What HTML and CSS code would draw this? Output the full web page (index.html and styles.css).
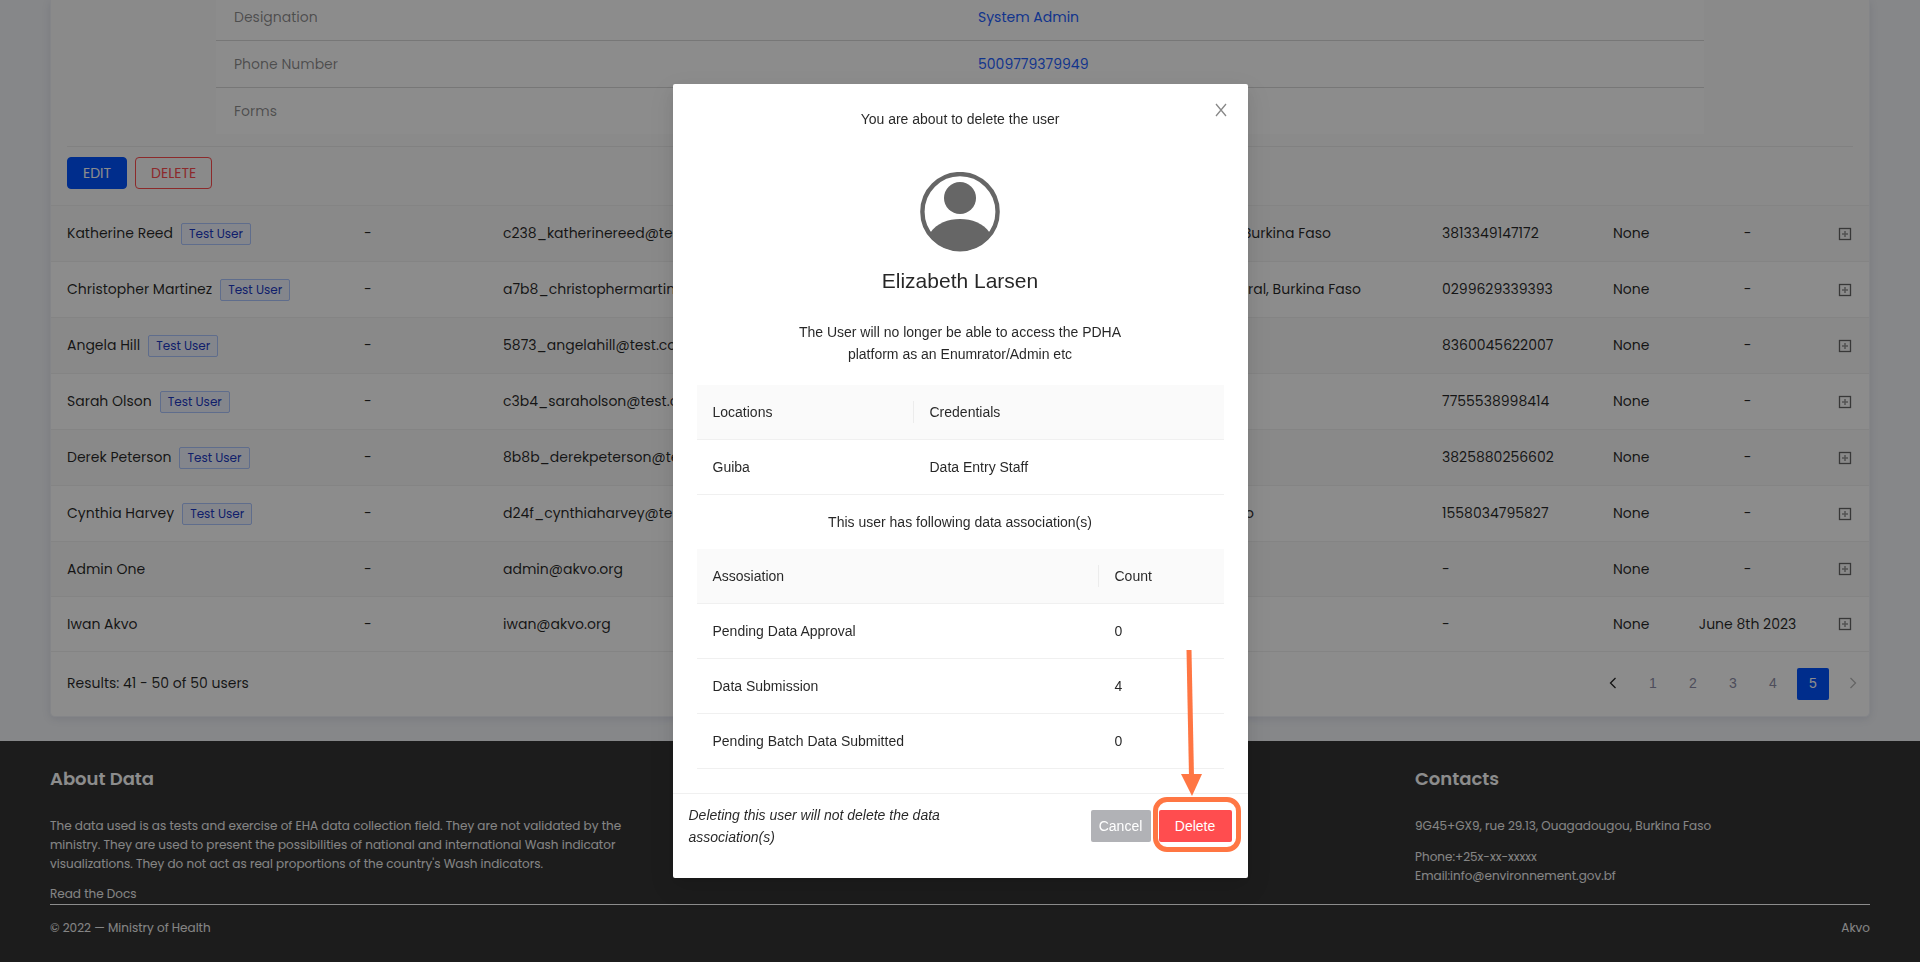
FILE: index.html
```html
<!DOCTYPE html>
<html lang="en">
<head>
<meta charset="utf-8">
<title>Manage Users</title>
<link rel="stylesheet" href="styles.css">
</head>
<body>
<svg class="sprite" aria-hidden="true">
  <symbol id="expand" viewBox="0 0 14 14"><rect x="1.500" y="1.500" width="11" height="11" fill="none" stroke="currentColor" stroke-width="1.300"/><path d="M4 7h6M7 4v6" stroke="currentColor" stroke-width="1.600" stroke-opacity=".65" fill="none"/></symbol>
</svg>

<main class="content">
  <section class="card">
    <div class="detail">
      <table class="info">
        <tr><th>Designation</th><td>System Admin</td></tr>
        <tr><th>Phone Number</th><td>5009779379949</td></tr>
        <tr><th>Forms</th><td></td></tr>
      </table>
      <div class="detail-actions">
        <button class="btn btn-primary" type="button">EDIT</button>
        <button class="btn btn-danger-outline" type="button">DELETE</button>
      </div>
    </div>

    <table class="users">
      <colgroup><col class="c-name"><col class="c-org"><col class="c-mail"><col><col class="c-phone"><col class="c-role"><col class="c-date"><col class="c-more"></colgroup>
      <tr><td>Katherine Reed<span class="tag">Test User</span></td><td>-</td><td>c238_katherinereed@test.com</td><td><span class="region" style="width:331px">Burkina Faso</span></td><td>3813349147172</td><td>None</td><td>-</td><td><button class="expand" type="button" aria-label="Expand"><svg><use href="#expand"/></svg></button></td></tr>
      <tr><td>Christopher Martinez<span class="tag">Test User</span></td><td>-</td><td>a7b8_christophermartinez@test.com</td><td><span class="region" style="width:361px">Central, Burkina Faso</span></td><td>0299629339393</td><td>None</td><td>-</td><td><button class="expand" type="button" aria-label="Expand"><svg><use href="#expand"/></svg></button></td></tr>
      <tr><td>Angela Hill<span class="tag">Test User</span></td><td>-</td><td>5873_angelahill@test.com</td><td></td><td>8360045622007</td><td>None</td><td>-</td><td><button class="expand" type="button" aria-label="Expand"><svg><use href="#expand"/></svg></button></td></tr>
      <tr><td>Sarah Olson<span class="tag">Test User</span></td><td>-</td><td>c3b4_saraholson@test.com</td><td></td><td>7755538998414</td><td>None</td><td>-</td><td><button class="expand" type="button" aria-label="Expand"><svg><use href="#expand"/></svg></button></td></tr>
      <tr><td>Derek Peterson<span class="tag">Test User</span></td><td>-</td><td>8b8b_derekpeterson@test.com</td><td></td><td>3825880256602</td><td>None</td><td>-</td><td><button class="expand" type="button" aria-label="Expand"><svg><use href="#expand"/></svg></button></td></tr>
      <tr><td>Cynthia Harvey<span class="tag">Test User</span></td><td>-</td><td>d24f_cynthiaharvey@test.com</td><td><span class="region" style="width:254px">Burkina Faso</span></td><td>1558034795827</td><td>None</td><td>-</td><td><button class="expand" type="button" aria-label="Expand"><svg><use href="#expand"/></svg></button></td></tr>
      <tr class="short"><td>Admin One</td><td>-</td><td>admin@akvo.org</td><td></td><td>-</td><td>None</td><td>-</td><td><button class="expand" type="button" aria-label="Expand"><svg><use href="#expand"/></svg></button></td></tr>
      <tr class="short"><td>Iwan Akvo</td><td>-</td><td>iwan@akvo.org</td><td></td><td>-</td><td>None</td><td>June 8th 2023</td><td><button class="expand" type="button" aria-label="Expand"><svg><use href="#expand"/></svg></button></td></tr>
    </table>

    <div class="pager">
      <span>Results: 41 - 50 of 50 users</span>
      <nav class="pages" aria-label="Pages">
        <button class="page page-prev" type="button" aria-label="Previous"><svg viewBox="0 0 12 12"><path d="M8.500 1L3.500 6l5 5"/></svg></button>
        <button class="page" type="button">1</button>
        <button class="page" type="button">2</button>
        <button class="page" type="button">3</button>
        <button class="page" type="button">4</button>
        <button class="page page-current" type="button" aria-current="page">5</button>
        <button class="page page-next" type="button" aria-label="Next" disabled><svg viewBox="0 0 12 12"><path d="M3.500 1l5 5-5 5"/></svg></button>
      </nav>
    </div>
  </section>
</main>

<footer class="footer">
  <div class="footer-top">
    <div class="about">
      <h2>About Data</h2>
      <p>The data used is as tests and exercise of EHA data collection field. They are not validated by the<br>ministry. They are used to present the possibilities of national and international Wash indicator<br>visualizations. They do not act as real proportions of the country's Wash indicators.</p>
      <a href="#docs">Read the Docs</a>
    </div>
    <div class="contacts">
      <h2>Contacts</h2>
      <p>9G45+GX9, rue 29.13, Ouagadougou, Burkina Faso</p>
      <p>Phone:+25x-xx-xxxxx<br>Email:info@environnement.gov.bf</p>
    </div>
  </div>
  <div class="footer-bottom"><span>© 2022 — Ministry of Health</span><a href="#akvo">Akvo</a></div>
</footer>

<div class="mask">
  <div class="modal" role="dialog" aria-modal="true" aria-labelledby="title">
    <button class="close" type="button" aria-label="Close"><svg viewBox="0 0 16 16"><path d="M3 2l10 12M13 2L3 14"/></svg></button>
    <div class="modal-body">
      <p id="title">You are about to delete the user</p>
      <svg class="avatar" viewBox="0 0 80 80">
        <defs><clipPath id="face"><circle cx="40" cy="40" r="39"/></clipPath></defs>
        <circle cx="40" cy="39.700" r="37.600" fill="none" stroke="#666" stroke-width="4.400"/>
        <circle cx="40" cy="26" r="16" fill="#666"/>
        <path clip-path="url(#face)" d="M10 61C17 51 28 47 40 47s23 4 30 14v19H10z" fill="#666"/>
      </svg>
      <h2 class="user-name">Elizabeth Larsen</h2>
      <p class="warning">The User will no longer be able to access the PDHA<br>platform as an Enumrator/Admin etc</p>
      <table class="grid">
        <colgroup><col class="g-location"><col></colgroup>
        <tr><th><span>Locations</span></th><th>Credentials</th></tr>
        <tr><td>Guiba</td><td>Data Entry Staff</td></tr>
      </table>
      <p class="caption">This user has following data association(s)</p>
      <table class="grid">
        <colgroup><col><col class="g-count"></colgroup>
        <tr><th><span>Assosiation</span></th><th>Count</th></tr>
        <tr><td>Pending Data Approval</td><td>0</td></tr>
        <tr><td>Data Submission</td><td>4</td></tr>
        <tr><td>Pending Batch Data Submitted</td><td>0</td></tr>
      </table>
    </div>
    <div class="modal-footer">
      <em>Deleting this user will not delete the data association(s)</em>
      <div class="modal-actions">
        <button class="btn-modal btn-cancel" type="button">Cancel</button>
        <span class="callout">
          <button class="btn-modal btn-delete" type="button">Delete</button>
          <svg class="arrow" viewBox="0 0 24 148"><path d="M9 1L11.500 128" stroke="#ff7643" stroke-width="5" fill="none"/><path d="M1 125h21L12 147z" fill="#ff7643"/></svg>
        </span>
      </div>
    </div>
  </div>
</div>
</body>
</html>
```

FILE: styles.css
```css
* { box-sizing: border-box; }
body {
  margin: 0;
  min-height: 100vh;
  display: flex;
  flex-direction: column;
  background: #f4f6f9;
  color: rgba(0, 0, 0, .85);
  font: 14px/22px Poppins, Inter, sans-serif;
}
button { font: inherit; cursor: pointer; }
a { color: inherit; text-decoration: none; }
p, h2 { margin: 0; }
table { border-collapse: separate; border-spacing: 0; width: 100%; }
th, td { font-weight: 400; text-align: left; padding: 0; }
.sprite { position: absolute; width: 0; height: 0; }

.content { padding: 0 50px 24px; }
.card {
  background: #fff;
  border: solid #f0f2f8;
  border-width: 0 1px 1px;
  border-radius: 0 0 5px 5px;
  box-shadow: 0 2px 8px rgba(60, 60, 120, .12);
}
.detail { background: #fbfbfb; padding: 0 16px 16px; border-bottom: 1px solid #f0f0f0; }
.info { margin: 0 149px; width: calc(100% - 298px); background: #fff; table-layout: fixed; }
.info th, .info td { padding: 12px 18px; border-bottom: 1px solid #d9d9d9; height: 47px; }
.info tr:first-child > * { padding-top: 6px; height: 41px; }
.info tr:last-child > * { border-bottom: 0; height: 46px; }
.info th { color: rgba(0, 0, 0, .45); }
.info td { color: #1f62ff; }
.detail-actions { display: flex; gap: 8px; margin-top: 12px; padding-top: 10px; border-top: 1px solid #ececec; }
.btn { height: 32px; padding: 0 15px; border-radius: 4px; border: 1px solid; line-height: 22px; }
.btn-primary { background: #0052ff; border-color: #0052ff; color: #fff; }
.btn-danger-outline { background: transparent; border-color: #ff4d4f; color: #ff4d4f; }

.users { table-layout: fixed; }
.users td { padding: 16px 16px 0; height: 56px; border-bottom: 1px solid #f0f0f0; white-space: nowrap; vertical-align: top; }
.users .short td { height: 55px; }
.users tr:nth-child(odd) td { background: #fafafa; }
.users td:nth-child(7) { text-align: center; padding: 16px 0 0; }
.users td:nth-child(8) { padding: 0 17px 0 0; vertical-align: middle; }
.c-name { width: 297px; }
.c-org { width: 139px; }
.c-mail { width: 497px; }
.c-phone { width: 171px; }
.c-role { width: 71px; }
.c-date { width: 159px; }
.c-more { width: 42px; }
.tag {
  display: inline-block;
  margin-left: 8px;
  padding: 0 7px;
  border: 1px solid #adc6ff;
  border-radius: 2px;
  background: #f0f5ff;
  color: #1d39c4;
  font-size: 12px;
  line-height: 20px;
}
.region { display: block; text-align: right; }
.expand { display: block; width: 14px; height: 14px; margin-left: auto; padding: 0; border: 0; background: none; color: #666; }
.expand svg { display: block; width: 14px; height: 14px; }

.pager { display: flex; justify-content: space-between; padding: 16px 0 16px 16px; }
.pager > span { padding-top: 4px; }
.pages { display: flex; gap: 8px; }
.page { width: 32px; height: 32px; padding: 0 0 2px; border: 0; border-radius: 2px; background: none; color: #8d8da6; font-family: "Liberation Sans", sans-serif; line-height: 30px; }
.page svg { width: 12px; height: 12px; display: block; margin: 0 auto; fill: none; stroke: #222; stroke-width: 1.3; }
.page-next svg { stroke: #b8b8b8; }
.page-current { background: #0052ff; color: #fff; }

.footer { flex: 1; background: #333; color: #fff; padding: 26px 50px 20px; font-size: 12px; line-height: 19px; }
.footer-top { display: grid; grid-template-columns: 3fr 1fr; padding-bottom: 1px; border-bottom: 1px solid #fff; }
.footer h2 { font-size: 18px; line-height: 24px; font-weight: 600; margin-bottom: 25px; }
.footer p { margin-bottom: 12px; }
.footer .about p { margin-bottom: 11px; }
.footer p, .footer a, .footer-bottom { color: #f2f2f2; }
.about a { display: block; }
.footer-bottom { display: flex; justify-content: space-between; padding-top: 13px; }

.mask { position: fixed; inset: 0; background: rgba(0, 0, 0, .45); padding-top: 84px; overflow: hidden; font-family: "Liberation Sans", Arial, sans-serif; }
.modal {
  position: relative;
  width: 575px;
  margin: 0 auto;
  background: #fff;
  border-radius: 2px;
  box-shadow: 0 3px 6px -4px rgba(0, 0, 0, .12), 0 6px 16px rgba(0, 0, 0, .08), 0 9px 28px 8px rgba(0, 0, 0, .05);
}
.close { position: absolute; top: 18px; right: 19px; width: 16px; height: 16px; padding: 0; border: 0; background: none; }
.close svg { display: block; width: 16px; height: 16px; fill: none; stroke: #888; stroke-width: 1.3; }
.modal-body { padding: 24px 24px 24px; text-align: center; }
.avatar { display: block; width: 80px; height: 80px; margin: 42px auto 13px; }
.user-name { font-size: 21px; line-height: 32px; font-weight: 400; }
.warning { margin: 24px 0 20px; }
.grid { table-layout: fixed; }
.grid th, .grid td { padding: 16px; border-bottom: 1px solid #f0f0f0; }
.grid th { background: #fafafa; }
.grid th span { display: block; margin-right: -16px; border-right: 1px solid #ececec; }
.g-location { width: 217px; }
.g-count { width: 125px; }
.caption { margin: 16px 0; }
.modal-footer { display: flex; justify-content: space-between; padding: 10px 16px 30px; border-top: 1px solid #f0f0f0; }
.modal-footer em { width: 272px; }
.modal-actions { display: flex; align-items: flex-start; gap: 8px; padding-top: 6px; }
.btn-modal { height: 32px; border: 0; border-radius: 2px; color: #fff; display: block; }
.btn-cancel { background: #b1b2b6; padding: 0; width: 60px; }
.btn-delete { background: #ff4d4f; padding: 0; width: 73px; }
.callout { position: relative; }
.callout::after { content: ""; position: absolute; inset: -13px -9px -10px -6px; border: 5px solid #ff7643; border-radius: 14px; }
.arrow { position: absolute; right: 28px; bottom: 45px; width: 24px; height: 148px; }
```
